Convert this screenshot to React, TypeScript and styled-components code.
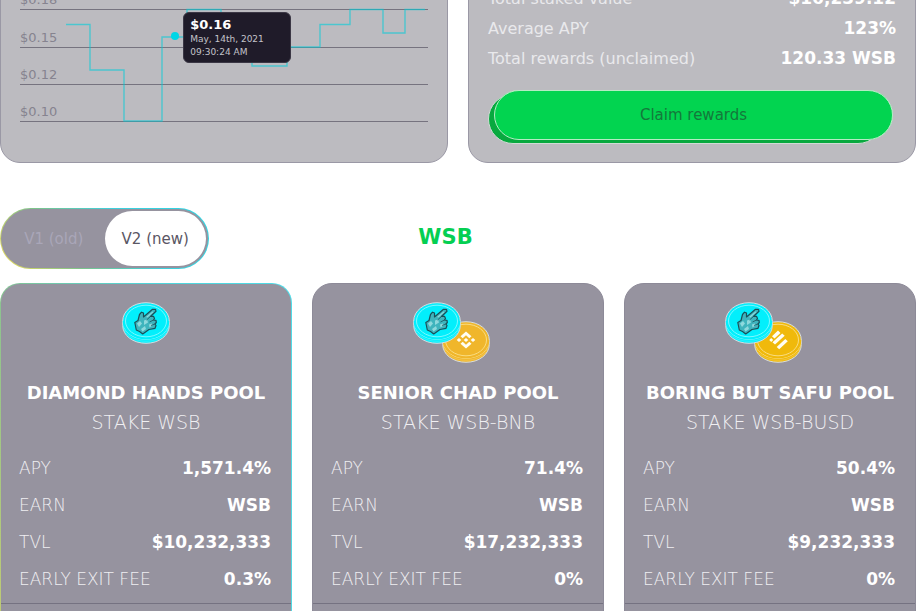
import React, { useState } from 'react';
import styled, { createGlobalStyle, css } from 'styled-components';

const rainbow = 'linear-gradient(52deg, #f0dc5a 0%, #7cc48c 32%, #3fd0dc 62%, #2fd6e4 100%)';
const cardRainbow = 'linear-gradient(80deg, #c8cc70 0%, #84c294 20%, #4fd4da 60%, #4fdce8 100%)';

const GlobalStyle = createGlobalStyle`
  *, *::before, *::after { box-sizing: border-box; }
  body {
    margin: 0;
    background: #ffffff;
    font-family: "DejaVu Sans", Inter, sans-serif;
  }
`;

const Page = styled.main`
  height: 100vh;
  overflow: hidden;
  padding-right: 1px;
`;

const Overview = styled.section`
  display: grid;
  grid-template-columns: 1fr 1fr;
  gap: 20px;
  margin-top: -48px;
`;

const Panel = styled.div`
  padding: 20px 19px;
  border: 1px solid #9a98a5;
  border-radius: 20px;
  background: #bcbbc0;
`;

const Chart = styled.div`
  position: relative;
  display: grid;
  grid-template-rows: repeat(4, 1fr);
  height: 149px;
`;

const Level = styled.div`
  display: flex;
  align-items: flex-end;
  padding-bottom: 2px;
  border-bottom: 1px solid #76737f;
  color: #86838f;
  font-size: 13px;
  line-height: 14px;
`;

const Line = styled.svg`
  position: absolute;
  inset: 0;
  width: 100%;
  height: 100%;
  fill: none;
  stroke: #00cdd8;
  stroke-opacity: 0.6;
`;

const Marker = styled.span`
  position: absolute;
  left: 37%;
  top: 59px;
  width: 8px;
  height: 8px;
  border-radius: 50%;
  background: #00d6e6;
`;

const Tooltip = styled.div`
  position: absolute;
  left: 40%;
  top: 39px;
  width: 108px;
  height: 51px;
  padding: 4px 6px;
  border: 1px solid #3b3745;
  border-radius: 6px;
  background: #1f1b29;
  color: #c4c3ca;
  font-size: 9px;
  line-height: 13px;
  white-space: nowrap;

  strong {
    display: block;
    color: #ffffff;
    font-size: 13px;
    font-weight: 700;
    line-height: 16px;
  }
`;

const Summary = styled.dl`
  margin: 0;
  padding-top: 10px;
`;

const SummaryRow = styled.div`
  display: flex;
  justify-content: space-between;
  align-items: center;
  height: 30px;

  dt { color: #e9e9ec; font-size: 16px; }
  dd { margin: 0; color: #ffffff; font-size: 17px; font-weight: 700; }
`;

const ClaimButton = styled.button`
  position: relative;
  z-index: 0;
  display: block;
  width: calc(100% - 9px);
  height: 50px;
  margin: 17px 3px 2px 6px;
  padding: 0;
  border: 1px solid #c9e6d0;
  border-radius: 25px;
  background: #02d450;
  color: #14783b;
  font: 400 15px "DejaVu Sans", sans-serif;

  &::before {
    content: "";
    position: absolute;
    z-index: -2;
    inset: 3px 9px -5px -7px;
    border: 1px solid #d0dcd5;
    border-radius: 25px;
    background: #08a93f;
  }

  &::after {
    content: "";
    position: absolute;
    z-index: -1;
    inset: -1px;
    border: 1px solid #b5ebc4;
    border-radius: 25px;
    background: #02d450;
  }
`;

const PoolsHeader = styled.header`
  display: grid;
  grid-template-columns: 1fr auto 1fr;
  align-items: center;
  margin: 45px 0 14px;
`;

const Switcher = styled.div`
  display: flex;
  width: 209px;
  height: 61px;
  padding: 2px;
  border: 1px solid transparent;
  border-radius: 31px;
  background: linear-gradient(#96939f, #96939f) padding-box, ${rainbow} border-box;
`;

const VersionButton = styled.button<{ $active: boolean }>`
  flex: 1;
  padding: 0;
  border: 0;
  border-radius: 28px;
  background: ${(p) => (p.$active ? '#ffffff' : 'transparent')};
  color: ${(p) => (p.$active ? '#5a5664' : '#a9a6b8')};
  font: 400 15px "DejaVu Sans", sans-serif;
`;

const PoolsTitle = styled.h2`
  margin: 0 25px 4px 0;
  color: #05cf52;
  font-size: 21px;
  line-height: 24px;
`;

const Pools = styled.section`
  display: grid;
  grid-template-columns: repeat(3, 1fr);
  gap: 20px;
`;

const PoolCard = styled.article<{ $featured?: boolean }>`
  display: flex;
  flex-direction: column;
  align-items: center;
  padding-top: 18px;
  border: 1px solid #8d8a98;
  border-radius: 20px;
  background: #96939f;
  ${(p) =>
    p.$featured &&
    css`
      border-color: transparent;
      background: linear-gradient(#96939f, #96939f) padding-box, ${cardRainbow} border-box;
    `}
`;

const PoolName = styled.h3`
  margin: 17px 0 0;
  color: #ffffff;
  font-size: 18px;
  line-height: 24px;
  white-space: nowrap;
`;

const PoolStake = styled.p`
  margin: 0 0 10px;
  color: #f0eff2;
  font-size: 19px;
  font-weight: 200;
  line-height: 34px;
`;

const Stats = styled.dl`
  align-self: stretch;
  margin: 0;
  padding: 0 20px 6px 18px;
`;

const Stat = styled.div`
  display: flex;
  justify-content: space-between;
  align-items: center;
  height: 37px;

  dt { color: #f0eff2; font-size: 17px; font-weight: 200; }
  dd { margin: 0; color: #ffffff; font-size: 17px; font-weight: 700; }
`;

const CardFooter = styled.footer`
  align-self: stretch;
  height: 60px;
  border-top: 1px solid #757281;
`;

const CoinBody = ({ color, rim }: { color: string; rim: string }) => (
  <>
    <path d="M.7 19v4.500C.7 33.500 11 41.300 24 41.300S47.300 33.500 47.300 23.500V19Z" fill={color} stroke="#d5dce0" />
    <path d="M1.400 22.500C3 31.500 12.500 37.300 24 37.300S45 31.500 46.600 22.500" fill="none" stroke={rim} strokeWidth="1" />
    <path d="M1.400 24.500C3 33.500 12.500 39.300 24 39.300S45 33.500 46.600 24.500" fill="none" stroke={rim} strokeOpacity=".5" strokeWidth=".7" />
    <ellipse cx="24" cy="19" rx="23.300" ry="18.300" fill={color} />
    <path d="M.7 19C.7 9 11 .7 24 .7S47.300 9 47.300 19" fill="none" stroke="#d5dce0" />
    <ellipse cx="24" cy="19" rx="20.500" ry="15.800" fill="none" stroke={rim} strokeWidth="1" />
  </>
);

const HandCoin = () => (
  <g>
    <CoinBody color="#02effc" rim="#7bf8ff" />
    <path
      d="M12.800 20.500L16 18.500 17.500 12.500 19.500 10.200 21.500 11 21.500 15 30.500 7.300 33.500 7.300 34 9.300 28.500 14.500 31.500 14.300 32.500 16.500 31.500 18 34 18.300 34.300 20.500 33 22 34 23.500 33 26.300 27 27.500 20.700 32 17.500 29.500 14.300 28Z"
      fill="#3fb4bd"
      stroke="#1b4f58"
      strokeWidth="1.200"
      strokeLinejoin="round"
    />
    <path d="M15 21.500l3-2.500 2 2.500-3 3.500Zm7-3l3-1 1 3-4 2.500Zm-3 8.500l4-3 1 3-3.500 2.500Zm8-4.500l3-1 .5 2-3 2ZM24 15l6.500-5.500 1 .5-6 5.500Z" fill="#8ed9dd" />
    <path d="M28.500 14.500l-4 3.500m7 0l-4 2m5.500 2l-4 1.500" fill="none" stroke="#1b555e" strokeWidth=".8" />
  </g>
);

const BnbMark = () => (
  <path
    d="M24 10.500l5.500 4.800-2.200 1.900-3.300-2.900-3.300 2.900-2.200-1.900ZM17 17l2.300 2-2.300 2-2.300-2Zm7 0l2.300 2-2.300 2-2.300-2Zm7 0l2.300 2-2.300 2-2.300-2ZM20.700 20.800l3.300 2.900 3.300-2.900 2.200 1.900-5.500 4.800-5.500-4.800Z"
    fill="#fffdf4"
  />
);

const BusdMark = () => (
  <path d="M15.200 19l2-2 2 2-2 2ZM18 15.200l6-5.600 2.500 2.400-6 5.600ZM18.500 21.200l9.700-8.800 2.500 2.400-9.700 8.800ZM22.700 25.900l8.600-8 2.500 2.400-8.600 8Z" fill="#fffdf4" />
);

type Partner = 'bnb' | 'busd';

const Coins = ({ partner }: { partner?: Partner }) => (
  <svg width={partner ? 90 : 48} height="62" viewBox={partner ? '0 0 90 62' : '0 0 48 62'} aria-hidden="true">
    {partner && (
      <g transform="translate(29 19)">
        <CoinBody color={partner === 'bnb' ? '#f0b62b' : '#f0b90b'} rim="#f9dc80" />
        {partner === 'bnb' ? <BnbMark /> : <BusdMark />}
      </g>
    )}
    <HandCoin />
  </svg>
);

const levels = ['$0.18', '$0.15', '$0.12', '$0.10'];

const summary = [
  ['Total staked value', '$16,239.12'],
  ['Average APY', '123%'],
  ['Total rewards (unclaimed)', '120.33 WSB'],
];

const pools: { name: string; stake: string; partner?: Partner; featured?: boolean; stats: string[][] }[] = [
  {
    name: 'DIAMOND HANDS POOL',
    stake: 'STAKE WSB',
    featured: true,
    stats: [['APY', '1,571.4%'], ['EARN', 'WSB'], ['TVL', '$10,232,333'], ['EARLY EXIT FEE', '0.3%']],
  },
  {
    name: 'SENIOR CHAD POOL',
    stake: 'STAKE WSB-BNB',
    partner: 'bnb',
    stats: [['APY', '71.4%'], ['EARN', 'WSB'], ['TVL', '$17,232,333'], ['EARLY EXIT FEE', '0%']],
  },
  {
    name: 'BORING BUT SAFU POOL',
    stake: 'STAKE WSB-BUSD',
    partner: 'busd',
    stats: [['APY', '50.4%'], ['EARN', 'WSB'], ['TVL', '$9,232,333'], ['EARLY EXIT FEE', '0%']],
  },
];

export default function App() {
  const [version, setVersion] = useState('V2 (new)');

  return (
    <>
      <GlobalStyle />
      <Page>
        <Overview>
          <Panel>
            <Chart>
              {levels.map((level) => (
                <Level key={level}>{level}</Level>
              ))}
              <Line viewBox="0 0 408 149" preserveAspectRatio="none" aria-hidden="true">
                <path
                  d="M46 51.500H70V97H104V148H142V64H167V36.500H201V74H232V93H267V74H300V51.500H330V36.500H363V60H385V36.500H405"
                  strokeWidth="1.400"
                />
              </Line>
              <Marker />
              <Tooltip>
                <strong>$0.16</strong>
                May, 14th, 2021
                <br />
                09:30:24 AM
              </Tooltip>
            </Chart>
          </Panel>
          <Panel>
            <Summary>
              {summary.map(([label, value]) => (
                <SummaryRow key={label}>
                  <dt>{label}</dt>
                  <dd>{value}</dd>
                </SummaryRow>
              ))}
            </Summary>
            <ClaimButton type="button">Claim rewards</ClaimButton>
          </Panel>
        </Overview>

        <PoolsHeader>
          <Switcher>
            {['V1 (old)', 'V2 (new)'].map((item) => (
              <VersionButton
                key={item}
                type="button"
                $active={item === version}
                aria-pressed={item === version}
                onClick={() => setVersion(item)}
              >
                {item}
              </VersionButton>
            ))}
          </Switcher>
          <PoolsTitle>WSB</PoolsTitle>
        </PoolsHeader>

        <Pools>
          {pools.map((pool) => (
            <PoolCard key={pool.name} $featured={pool.featured}>
              <Coins partner={pool.partner} />
              <PoolName>{pool.name}</PoolName>
              <PoolStake>{pool.stake}</PoolStake>
              <Stats>
                {pool.stats.map(([label, value]) => (
                  <Stat key={label}>
                    <dt>{label}</dt>
                    <dd>{value}</dd>
                  </Stat>
                ))}
              </Stats>
              <CardFooter />
            </PoolCard>
          ))}
        </Pools>
      </Page>
    </>
  );
}
